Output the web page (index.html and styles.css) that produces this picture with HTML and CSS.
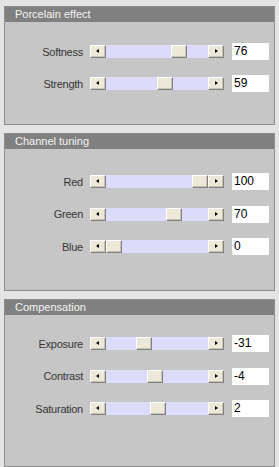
FILE: index.html
```html
<!DOCTYPE html>
<html>
<head>
<meta charset="utf-8">
<link rel="stylesheet" href="styles.css">
</head>
<body>
<div class="page">
  <section class="panel p1">
    <div class="head">Porcelain effect</div>
    <div class="body">
      <div class="row"><span class="lbl">Softness</span><div class="sb"><span class="btn l"></span><span class="track"><span class="thumb" style="--v:0.76"></span></span><span class="btn r"></span></div><span class="val">76</span></div>
      <div class="row"><span class="lbl">Strength</span><div class="sb"><span class="btn l"></span><span class="track"><span class="thumb" style="--v:0.59"></span></span><span class="btn r"></span></div><span class="val">59</span></div>
    </div>
  </section>
  <section class="panel p2">
    <div class="head">Channel tuning</div>
    <div class="body">
      <div class="row"><span class="lbl">Red</span><div class="sb"><span class="btn l"></span><span class="track"><span class="thumb" style="--v:1"></span></span><span class="btn r"></span></div><span class="val">100</span></div>
      <div class="row"><span class="lbl">Green</span><div class="sb"><span class="btn l"></span><span class="track"><span class="thumb" style="--v:0.70"></span></span><span class="btn r"></span></div><span class="val">70</span></div>
      <div class="row"><span class="lbl">Blue</span><div class="sb"><span class="btn l"></span><span class="track"><span class="thumb" style="--v:0"></span></span><span class="btn r"></span></div><span class="val">0</span></div>
    </div>
  </section>
  <section class="panel p3">
    <div class="head">Compensation</div>
    <div class="body">
      <div class="row"><span class="lbl">Exposure</span><div class="sb"><span class="btn l"></span><span class="track"><span class="thumb" style="--v:0.345"></span></span><span class="btn r"></span></div><span class="val">-31</span></div>
      <div class="row"><span class="lbl">Contrast</span><div class="sb"><span class="btn l"></span><span class="track"><span class="thumb" style="--v:0.48"></span></span><span class="btn r"></span></div><span class="val">-4</span></div>
      <div class="row"><span class="lbl">Saturation</span><div class="sb"><span class="btn l"></span><span class="track"><span class="thumb" style="--v:0.51"></span></span><span class="btn r"></span></div><span class="val">2</span></div>
    </div>
  </section>
</div>
</body>
</html>
```

FILE: styles.css
```css
html, body {
  margin: 0;
  padding: 0;
  background: #e4e4e4;
  font-family: "Liberation Sans", Arial, sans-serif;
}
.page {
  padding: 6px 4px 0 4px;
  display: flex;
  flex-direction: column;
  gap: 8px;
  height: 467px;
  box-sizing: border-box;
}
.panel {
  width: 271px;
  border: 1px solid #8c8c8c;
  background: #c6c6c6;
  box-sizing: border-box;
  display: flex;
  flex-direction: column;
}
.head {
  height: 15px;
  background: #808080;
  color: #f4f4f4;
  font-size: 11px;
  line-height: 15px;
  padding-left: 10px;
}
.body {
  display: flex;
  flex-direction: column;
  gap: 15.5px;
}
.p1 .body { padding: 21px 0 32px; gap: 15px; }
.p2 .body { padding: 24px 0 35px; }
.p3 { flex: 1; }
.p3 .body { padding: 20px 0 0; }
.row {
  display: flex;
  align-items: center;
  height: 17px;
}
.lbl {
  width: 78px;
  text-align: right;
  font-size: 11px;
  letter-spacing: -0.25px;
  color: #363636;
  margin-right: 7px;
}
.sb {
  display: flex;
  width: 134px;
  height: 13px;
}
.btn, .thumb {
  width: 16px;
  height: 13px;
  box-sizing: border-box;
  background: #ece9d8;
  border: 1px solid;
  border-color: #ffffff #808080 #808080 #ffffff;
  box-shadow: inset -1px -1px 0 #c8c5b6;
  position: relative;
  flex: none;
}
.btn::after {
  content: "";
  position: absolute;
  top: 3px;
  width: 0;
  height: 0;
  border-top: 2.5px solid transparent;
  border-bottom: 2.5px solid transparent;
}
.btn.l::after {
  left: 5px;
  border-right: 3px solid #000;
}
.btn.r::after {
  left: 6px;
  border-left: 3px solid #000;
}
.track {
  flex: 1;
  position: relative;
  background: #dcdcfa;
}
.thumb {
  position: absolute;
  top: 0;
  left: calc(var(--v) * 86px);
}
.val {
  margin-left: 8px;
  width: 37px;
  height: 17px;
  background: #ffffff;
  font-size: 12px;
  line-height: 17px;
  color: #000;
  padding-left: 2px;
  box-sizing: border-box;
}
```
